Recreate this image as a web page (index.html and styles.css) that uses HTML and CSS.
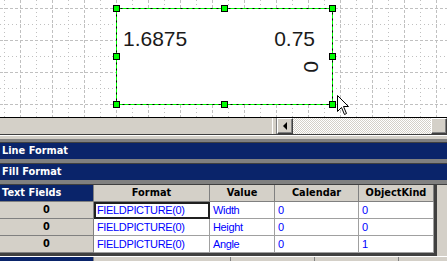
FILE: index.html
```html
<!DOCTYPE html>
<html>
<head>
<meta charset="utf-8">
<link rel="stylesheet" href="styles.css">
</head>
<body>
<div class="canvas">
  <svg width="447" height="117" viewBox="0 0 447 117" xmlns="http://www.w3.org/2000/svg">
    <defs>
      <pattern id="gx" x="0" y="0" width="32" height="117" patternUnits="userSpaceOnUse">
        <line x1="4.5" y1="0" x2="4.5" y2="117" stroke="#c0c0c0" stroke-width="1" stroke-dasharray="1 3"/>
        <line x1="20.5" y1="0" x2="20.5" y2="117" stroke="#c0c0c0" stroke-width="1" stroke-dasharray="3 2"/>
      </pattern>
    </defs>
    <rect x="0" y="0" width="447" height="117" fill="#fff"/>
    <rect x="0" y="0" width="447" height="117" fill="url(#gx)"/>
    <g stroke="#c0c0c0" stroke-width="1">
      <line x1="0" y1="8.5" x2="447" y2="8.5" stroke-dasharray="3 2"/>
      <line x1="0" y1="24.5" x2="447" y2="24.5" stroke-dasharray="1 3"/>
      <line x1="0" y1="40.5" x2="447" y2="40.5" stroke-dasharray="3 2"/>
      <line x1="0" y1="56.5" x2="447" y2="56.5" stroke-dasharray="1 3"/>
      <line x1="0" y1="72.5" x2="447" y2="72.5" stroke-dasharray="3 2"/>
      <line x1="0" y1="88.5" x2="447" y2="88.5" stroke-dasharray="1 3"/>
      <line x1="0" y1="104.5" x2="447" y2="104.5" stroke-dasharray="3 2"/>
    </g>
    <rect x="116.5" y="8.5" width="216" height="96" fill="#fff" stroke="#000" stroke-width="1"/>
    <rect x="116.5" y="8.5" width="216" height="96" fill="none" stroke="#00ff00" stroke-width="1" stroke-dasharray="4 2"/>
    <text class="num" x="123" y="46">1.6875</text>
    <text class="num" x="315" y="46" text-anchor="end">0.75</text>
    <text class="num" transform="translate(304,61) rotate(90)" x="0" y="0">0</text>
    <g fill="#00ff00" stroke="#000" stroke-width="1">
      <rect x="113.5" y="5.5" width="6" height="6"/>
      <rect x="221.5" y="5.5" width="6" height="6"/>
      <rect x="329.5" y="5.5" width="6" height="6"/>
      <rect x="113.5" y="53.5" width="6" height="6"/>
      <rect x="329.5" y="53.5" width="6" height="6"/>
      <rect x="113.5" y="101.5" width="6" height="6"/>
      <rect x="221.5" y="101.5" width="6" height="6"/>
      <rect x="329.5" y="101.5" width="6" height="6"/>
    </g>
  </svg>
  <svg class="cursor" width="13" height="22" viewBox="0 0 13 22" xmlns="http://www.w3.org/2000/svg">
    <path d="M0.5 0.5 L0.5 16.5 L4.5 12.5 L7.5 19.5 L9.5 18.5 L6.5 11.5 L11.5 11.5 Z" fill="#fff" stroke="#000" stroke-width="1" stroke-linejoin="miter"/>
  </svg>
</div>

<div class="hscroll">
  <div class="tabs"></div>
  <div class="splitter"></div>
  <div class="sbtn"><span class="arrow-left"></span></div>
  <div class="track"></div>
  <div class="sbtn"></div>
</div>
<div class="divider"></div>

<div class="panelbar">Line Format</div>
<div class="sep"></div>
<div class="panelbar">Fill Format</div>
<div class="sep"></div>

<div class="gridwrap">
  <div class="grid">
    <div class="cell hd first">Text Fields</div>
    <div class="cell hd">Format</div>
    <div class="cell hd">Value</div>
    <div class="cell hd">Calendar</div>
    <div class="cell hd">ObjectKind</div>

    <div class="cell rh">0</div>
    <div class="cell dt sel">FIELDPICTURE(0)</div>
    <div class="cell dt">Width</div>
    <div class="cell dt">0</div>
    <div class="cell dt">0</div>

    <div class="cell rh">0</div>
    <div class="cell dt">FIELDPICTURE(0)</div>
    <div class="cell dt">Height</div>
    <div class="cell dt">0</div>
    <div class="cell dt">0</div>

    <div class="cell rh">0</div>
    <div class="cell dt">FIELDPICTURE(0)</div>
    <div class="cell dt">Angle</div>
    <div class="cell dt">0</div>
    <div class="cell dt">1</div>
  </div>
</div>
<div class="nextrow">
  <div class="nr-first"></div>
  <div class="nr-a"></div>
  <div class="nr-b"></div>
  <div class="nr-c"></div>
  <div class="nr-d"></div>
</div>
</body>
</html>
```

FILE: styles.css
```css
html, body {
  margin: 0;
  padding: 0;
}
body {
  width: 447px;
  height: 261px;
  overflow: hidden;
  background: #d4d0c8;
  font-family: "Liberation Sans", Arial, sans-serif;
}
.canvas {
  position: relative;
  height: 117px;
  border-bottom: 1px solid #000;
  background: #fff;
}
.canvas svg {
  display: block;
}
.num {
  font-family: "Liberation Sans", Arial, sans-serif;
  font-size: 21px;
  fill: #1a1a1a;
}
.cursor {
  position: absolute;
  left: 337px;
  top: 95px;
}
.hscroll {
  display: flex;
  height: 16px;
  background: #d4d0c8;
  border-bottom: 1px solid #404040;
}
.tabs {
  width: 272px;
  background: #d4d0c8;
}
.splitter {
  width: 3px;
  border-left: 1px solid #fff;
  border-right: 1px solid #808080;
  background: #d4d0c8;
}
.sbtn {
  width: 14px;
  height: 14px;
  background: #d4d0c8;
  border-top: 1px solid #fff;
  border-left: 1px solid #fff;
  border-right: 1px solid #404040;
  border-bottom: 1px solid #404040;
  box-shadow: inset -1px -1px 0 #808080;
  display: flex;
  align-items: center;
  justify-content: center;
}
.arrow-left {
  width: 0;
  height: 0;
  border-top: 4px solid transparent;
  border-bottom: 4px solid transparent;
  border-right: 4px solid #000;
}
.track {
  flex: 1;
  background-color: #fff;
  background-image: linear-gradient(45deg, #d4d0c8 25%, transparent 25%, transparent 75%, #d4d0c8 75%),
                    linear-gradient(45deg, #d4d0c8 25%, transparent 25%, transparent 75%, #d4d0c8 75%);
  background-size: 2px 2px;
  background-position: 0 0, 1px 1px;
}
.divider {
  height: 8px;
  border-top: 1px solid #fff;
  background: linear-gradient(#d4d0c8 0, #d4d0c8 3px, #808080 3px, #808080 6px, #404040 6px);
  box-sizing: border-box;
}
.panelbar {
  height: 16px;
  line-height: 16px;
  background: #0a246a;
  color: #fff;
  font-family: "DejaVu Sans", Verdana, sans-serif;
  font-weight: bold;
  font-size: 9.8px;
  padding-left: 2px;
}
.sep {
  height: 4px;
  background: #808080;
  border-bottom: 1px solid #404040;
}
.gridwrap {
  width: 434px;
  border-right: 3px solid #404040;
  border-bottom: 3px solid #404040;
  background: #fff;
}
.grid {
  display: grid;
  grid-template-columns: 94px 116px 65px 84px 75px;
  grid-auto-rows: 17px;
}
.cell {
  box-sizing: border-box;
  border-right: 1px solid #a0a0a0;
  border-bottom: 1px solid #a0a0a0;
  white-space: nowrap;
  overflow: hidden;
  line-height: 16px;
}
.hd {
  background: #d4d0c8;
  font-family: "DejaVu Sans", Verdana, sans-serif;
  font-weight: bold;
  font-size: 9.8px;
  color: #000;
  text-align: center;
  border-right-color: #808080;
  border-bottom-color: #808080;
}
.hd.first {
  background: #0a246a;
  color: #fff;
  text-align: left;
  padding-left: 2px;
}
.rh {
  background: #d4d0c8;
  font-family: "DejaVu Sans", Verdana, sans-serif;
  font-weight: bold;
  font-size: 9.8px;
  text-align: center;
  border-right-color: #808080;
  border-bottom-color: #808080;
}
.dt {
  background: #fff;
  color: #0000ff;
  font-size: 11px;
  letter-spacing: -0.35px;
  padding-left: 3px;
}
.sel {
  border: 2px solid #202020;
  padding-left: 1px;
  line-height: 13px;
}
.nextrow {
  display: flex;
  height: 5px;
  border-top: 1px solid #fff;
}
.nr-first {
  width: 93px;
  background: #0a246a;
}
.nr-a, .nr-b, .nr-c, .nr-d {
  border-left: 1px solid #808080;
}
.nr-a { width: 136px; }
.nr-b { width: 83px; }
.nr-c { width: 83px; }
.nr-d { flex: 1; }
```
